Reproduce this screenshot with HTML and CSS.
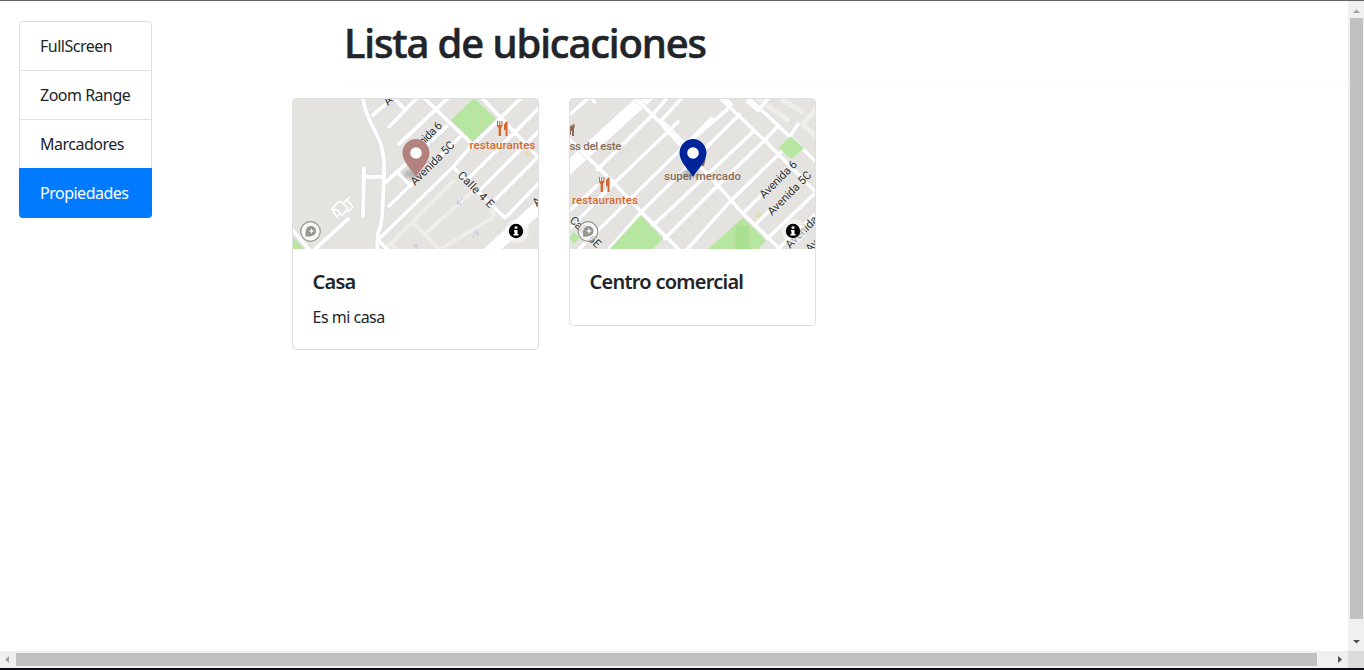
FILE: index.html
```
<!DOCTYPE html>
<html lang="es">
<head>
<meta charset="utf-8">
<title>Lista de ubicaciones</title>
<link rel="stylesheet" href="styles.css">
</head>
<body>
<div class="window">
  <div class="page">
    <nav class="menu">
      <a class="menu-item">FullScreen</a>
      <a class="menu-item">Zoom Range</a>
      <a class="menu-item">Marcadores</a>
      <a class="menu-item active">Propiedades</a>
    </nav>
    <main class="content">
      <h1 class="title">Lista de ubicaciones</h1>
      <hr class="rule">
      <div class="cards">
        <article class="card">
          <svg class="map" viewBox="293 99 245 150">
            <g class="green"><path d="M450 121L474 98L497 120L473 143ZM293 237L304 249H293Z"/></g>
            <g transform="translate(291 97) scale(.3333)">
              <path class="minor" d="M300 440L490 250M370 380L445 458M400 412L545 283M450 455L600 365Q620 350 596 338M300 435L318 460M285 455L300 440"/>
              <path class="road wide casing" d="M590 470L760 315"/>
              <path class="road wide" d="M590 470L760 315"/>
            </g>
            <g class="road casing"><use href="#roads-casa"/></g>
            <g class="road"><path id="roads-casa" d="M363 97C364 114 375 129 380 142C386 158 384 176 383 198C382 224 381 226 378 233L377 251M364 168L363 216M364 177H383M348 219L312 252M290 227L312 253M373 115L394 97M389 127L417 98M392 96L405 110M399 144L448 98M422 96L473 145L523 96M481 97L541 160M386 182L407 163L447 126M397 172L411 186M389 206L461 136M378 240L453 167L473 144M378 240L389 251M453 167L505 218L541 181M467 180L541 106M478 192L541 129M490 205L537 158"/></g>
            <path class="plot" d="M332 209l6-7 4 0 6 7-6 6-5-5zM342 204l5-4 6 7-5 5M341 213l-4 4-5-8M342 204l8-7"/>
            <path class="pitch" d="M472.500 111h8v18h-8z"/>
            <path class="sand" d="M527 150l5 4-4 4-4-4z"/>
            <g class="arrows"><path d="M463 198l-6 6m1-4l-1 4 4 0M472 238l6-6m-4 0h4v4M412 250l5-5m-4 0h4v4"/></g>
            <g class="street">
              <text transform="translate(388 106) rotate(-45)">Av</text>
              <text transform="translate(411 158) rotate(-45)" textLength="45">Avenida 6</text>
              <text transform="translate(415 186) rotate(-45)" textLength="57">Avenida 5C</text>
              <text transform="translate(457 176) rotate(45)" textLength="46">Calle 4 E</text>
              <text transform="translate(537 207) rotate(-45)">A</text>
            </g>
            <g class="food"><use href="#fork" x="497" y="121"/><text x="469.500" y="149" textLength="66">restaurantes</text></g>
            <ellipse class="shadow" cx="412" cy="174" rx="9" ry="4"/>
            <use href="#pin" x="416" y="153" fill="#b3827f"/>
            <use href="#logo" x="310.500" y="231.500"/>
            <use href="#info" x="516" y="231"/>
          </svg>
          <div class="card-body"><h5 class="card-title">Casa</h5><p class="card-text">Es mi casa</p></div>
        </article>
        <article class="card">
          <svg class="map" viewBox="570 99 245 150">
            <g transform="translate(568 97) scale(.3333)">
              <path class="minor thick" d="M570 5L658 68M645 10L702 44M750 30L705 82L745 118"/>
              <path class="road wide casing" d="M-10 223L245 -10"/>
              <path class="road wide" d="M-10 223L245 -10"/>
              <g class="road big casing"><use href="#roads-centro"/></g>
              <g class="road big"><path id="roads-centro" d="M-5 118L130 250L220 345L340 465M65 -5L80 15M195 -5L270 70L360 170L450 265L525 350L645 465M445 -8L590 130L750 292M530 -8L630 85L750 200M-5 62L65 0M88 218L255 52L300 0M0 345L88 265M0 400L135 262L330 75M350 140L280 70L345 0M345 150L430 65M30 460L345 150L475 40L490 22L462 -5M120 460L220 345L515 52M255 385L560 100M290 425L440 275L590 130L632 85M350 465L490 310L655 150M525 350L600 275M560 385L600 345M598 425L750 280M630 455L750 345M665 120L690 82M540 15L570 40L600 5"/></g>
              <path class="green" d="M218 355L284 425L250 462H119ZM525 362L594 430L566 462H414ZM668 118L708 154L671 186L632 153ZM17 405L35 422L18 440L3 422Z"/>
              <path class="pitch filled" d="M503 385H546V465H498Z"/>
            </g>
            <path class="sand" d="M759 212l4 3-5 4-4-3z"/>
            <g class="street">
              <text transform="translate(764 199) rotate(-45)" textLength="48">Avenida 6</text>
              <text transform="translate(772 216) rotate(-45)" textLength="57">Avenida 5C</text>
              <text transform="translate(790 249) rotate(-45)">Avenida</text>
              <text transform="translate(810 253) rotate(-45)">Av</text>
              <text transform="translate(569 221) rotate(45)" textLength="39">Calle 6E</text>
            </g>
            <g class="food"><use href="#fork" x="599" y="177"/><text x="572" y="204" textLength="66">restaurantes</text></g>
            <g class="shop"><path d="M574 123c-1 2-2 3-5 3v9h2v-4h1v5h2v-8l1-1zM707 154l-1 4-4 5v3h2m2-7v7"/><text x="569.500" y="149.500" textLength="52">ss del este</text><text x="664" y="180" textLength="77">super mercado</text></g>
            <ellipse class="shadow" cx="689" cy="174" rx="9" ry="4"/>
            <use href="#pin" x="693" y="153" fill="#00259a"/>
            <use href="#logo" x="588" y="231.500"/>
            <use href="#info" x="793" y="231"/>
          </svg>
          <div class="card-body"><h5 class="card-title">Centro comercial</h5></div>
        </article>
      </div>
    </main>
  </div>
  <div class="vbar"><svg class="arrow" viewBox="0 0 16 16"><path fill="#a3a3a3" d="M5 11h7L8.500 7.500z"/></svg><div class="vthumb"></div><svg class="arrow" viewBox="0 0 16 16"><path fill="#505050" d="M5 6h7L8.500 9.500z"/></svg></div>
  <div class="hbar"><svg class="arrow" viewBox="0 0 16 16"><path fill="#a3a3a3" d="M9 5v7L5 8.500z"/></svg><div class="hthumb"></div><svg class="arrow" viewBox="0 0 16 16"><path fill="#505050" d="M6 5v7L10 8.500z"/></svg></div>
  <div class="corner"></div>
</div>
<svg class="defs">
  <defs>
    <g id="pin"><path d="M0 24C-4 17-13.500 9-13.500 0C-13.500-8-7-14 0-14S13.500-8 13.500 0C13.500 9 4 17 0 24Z"/><circle r="5.800" fill="#fff"/></g>
    <g id="fork"><path d="M0 0h1v4h1.200V0h1v4h1.200V0h1v5L4 7v8H1.600V7L0 5zM10.500 0v15H8.500V9H7V4Q7.500 1 10.500 0z"/></g>
    <g id="logo"><circle r="9.800" fill="#fff" fill-opacity=".7" stroke="#96968f" stroke-width="1.200"/><path d="M-5 5C-5.500-1-4-5.500.5-5.500A5 5 0 0 1 5.500-.5C5.500 4 1 5.500-5 5Z" fill="#96968f"/><path d="M1-3.500l.8 2.200L4-.5 1.800.3 1 2.500.2.3-2-.5l2.200-.8z" fill="#fff"/></g>
    <g id="info"><circle r="12" cx="1" fill="#fff" fill-opacity=".5"/><circle r="7.200"/><path fill="#fff" d="M-1.400-4.500h2.800v2.300h-2.800zM-2-1h3.500v4H2.500v1.500h-5V3h1V.5H-2z"/></g>
  </defs>
</svg>
</body>
</html>
```
FILE: styles.css
```
* { box-sizing: border-box; }
body { margin: 0; overflow: hidden; background: #0c0a16; font: 16px/24px "Segoe UI", "Noto Sans", "Open Sans", sans-serif; letter-spacing: -.5px; color: #212529; }
.window { display: grid; width: 1364px; height: 668px; grid-template-columns: 1348px 16px; grid-template-rows: 650px 17px; border-top: 1px solid #646464; background: #fff; }
.page { display: flex; align-items: flex-start; padding: 20px 0 0 19px; overflow: hidden; }
.menu { display: flex; flex-direction: column; width: 133px; border: 1px solid #dfdfdf; border-radius: 4px; }
.menu-item { height: 49px; padding: 12px 20px; border-bottom: 1px solid #dfdfdf; white-space: nowrap; }
.menu-item.active { margin: -1px; height: 50px; padding: 13px 21px; border: 0; background: #007bff; color: #fff; border-radius: 0 0 4px 4px; }
.content { flex: 1; margin-left: 140px; }
.title { margin: -2px 0 14px 52px; font-size: 40px; line-height: 48px; font-weight: 500; letter-spacing: -1.1px; -webkit-text-stroke: .6px #212529; }
.rule { margin: 0 0 16px 53px; border: 0; border-top: 1px solid #f8f8f8; }
.cards { display: flex; align-items: flex-start; gap: 30px; }
.card { width: 247px; border: 1px solid #dfdfdf; border-radius: 4px; overflow: hidden; }
.map { display: block; width: 245px; height: 150px; background: #e4e3df; letter-spacing: 0; }
.card-body { padding: 21px 20px 20px 19.5px; }
.card-title { margin: 0 0 11px; font-size: 20px; line-height: 24px; font-weight: 600; letter-spacing: -.75px; }
.card-text { margin: 0; }
.road { fill: none; stroke: #fff; stroke-width: 3.8; stroke-linecap: round; stroke-linejoin: round; }
.road.casing { stroke: #dbdae6; stroke-width: 5; }
.road.big { stroke-width: 11; }
.road.big.casing { stroke-width: 14; }
.road.wide { stroke-width: 38; }
.road.wide.casing { stroke-width: 42; }
.minor { fill: none; stroke: #efeeeb; stroke-width: 11; }
.minor.thick { stroke-width: 15; stroke-linecap: round; }
.green { fill: #b6e69f; }
.plot { fill: none; stroke: #fff; stroke-width: 1.6; }
.pitch { fill: none; stroke: #c4dfa0; stroke-width: 1; }
.pitch.filled { fill: #a8df90; stroke-width: 3; }
.sand { fill: #e6dfb9; }
.arrows { fill: none; stroke: #bfc3e0; stroke-width: 1; }
.street, .food, .shop { font-family: Roboto, "Open Sans", sans-serif; font-size: 11.5px; stroke-linejoin: round; paint-order: stroke; }
.street { fill: #333; stroke: #f0efed; stroke-width: 1.5; }
.food { fill: #d4662d; stroke: #f0efed; stroke-width: .8; font-weight: 500; }
.shop { fill: #8a6c59; stroke: #f0efed; stroke-width: .8; font-weight: 500; }
.shadow { fill: #555; opacity: .35; filter: blur(2px); }
.vbar { display: flex; flex-direction: column; background: #f0f0f0; }
.vthumb { height: 601px; margin: 0 1px 0 2px; background: #c1c1c1; }
.vbar .arrow:first-child { margin-top: 1px; }
.vbar .arrow:last-child { margin-top: 15px; }
.hbar { display: flex; background: #f0f0f0; }
.hthumb { width: 1301px; height: 13px; margin-top: 2px; background: #c1c1c1; }
.hbar .arrow:last-child { margin-left: 15px; }
.arrow { width: 16px; height: 16px; flex: none; }
.corner { background: #dcdcdc; }
.defs { display: none; }
```
